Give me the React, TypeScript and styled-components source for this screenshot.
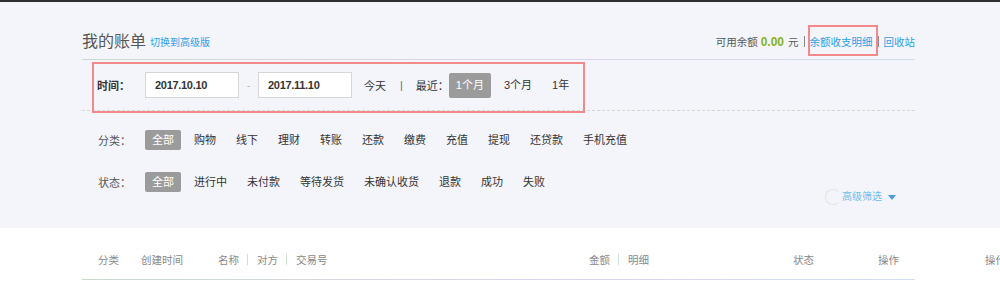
import React from 'react';
import styled, { createGlobalStyle } from 'styled-components';

const GlobalStyle = createGlobalStyle`
  html, body {
    margin: 0;
    padding: 0;
    background: #fff;
    overflow: hidden;
  }
  body {
    font-family: "Liberation Sans", "Noto Sans CJK SC", sans-serif;
    color: #333;
  }
`;

const Page = styled.div`
  position: relative;
  width: 1000px;
  height: 285px;
  overflow: hidden;
`;

const TopBar = styled.div`
  height: 2px;
  background: #2f2f2f;
`;

const Upper = styled.section`
  background: #f4f5fa;
  padding-bottom: 25px;
`;

const Container = styled.div`
  margin-left: 82px;
  width: 833px;
`;

const Header = styled.div`
  display: flex;
  align-items: center;
  height: 35px;
  padding-top: 22px;
`;

const Title = styled.h1`
  margin: 0;
  font-size: 16px;
  font-weight: normal;
  line-height: 20px;
  color: #555;
`;

const BlueLink = styled.a<{ $size?: number }>`
  color: #2ba0e6;
  font-size: ${(p) => p.$size || 10.5}px;
  text-decoration: none;
  line-height: 16px;
`;

const SwitchLink = styled(BlueLink)`
  margin-left: 4px;
  margin-top: 2px;
`;

const Balance = styled.div`
  margin-left: auto;
  display: flex;
  align-items: center;
  font-size: 10.5px;
  color: #555;
  line-height: 16px;
`;

const Amount = styled.b`
  color: #86b21a;
  font-size: 12px;
  margin: 0 4px 0 3px;
`;

const Bar = styled.span<{ $gap?: number }>`
  display: inline-block;
  width: 1px;
  height: 11px;
  background: #888;
  margin: 0 ${(p) => p.$gap || 5}px;
`;

const GradientLine = styled.div`
  height: 1px;
  background: linear-gradient(to right, #c9dccb, #ddd3ee 55%, #cfe0f3);
`;

const TimeRow = styled.div`
  display: flex;
  align-items: center;
  height: 50px;
  padding-left: 15px;
  border-bottom: 1px dashed #d6d6d6;
  font-size: 11px;
`;

const RowLabel = styled.span<{ $bold?: boolean; $w: number }>`
  width: ${(p) => p.$w}px;
  flex-shrink: 0;
  font-size: 11px;
  font-weight: ${(p) => (p.$bold ? 'bold' : 'normal')};
  color: ${(p) => (p.$bold ? '#333' : '#555')};
`;

const DateInput = styled.input`
  box-sizing: border-box;
  width: 94px;
  height: 26px;
  border: 1px solid #d6d6d6;
  background: #fff;
  padding: 0 0 0 9px;
  font-family: "Liberation Sans", sans-serif;
  font-size: 11px;
  font-weight: bold;
  letter-spacing: -0.3px;
  color: #333;
  outline: none;
`;

const Dash = styled.span`
  width: 19px;
  text-align: center;
  color: #bbb;
`;

const Plain = styled.span<{ $ml?: number }>`
  margin-left: ${(p) => p.$ml || 0}px;
  color: #333;
`;

const Pipe = styled.span`
  margin: 0 13px 0 14px;
  color: #666;
`;

const Chip = styled.span<{ $active?: boolean; $h: number }>`
  display: inline-block;
  flex-shrink: 0;
  padding: 0 7px;
  height: ${(p) => p.$h}px;
  line-height: ${(p) => p.$h}px;
  margin-right: 6px;
  border-radius: 2px;
  font-size: 11px;
  background: ${(p) => (p.$active ? '#9b9b9b' : 'transparent')};
  color: ${(p) => (p.$active ? '#fff' : '#333')};
`;

const Filters = styled.div`
  padding-top: 8px;
`;

const FilterRow = styled.div`
  display: flex;
  align-items: center;
  height: 42px;
  padding-left: 16px;
`;

const Advanced = styled.div`
  margin-left: auto;
  margin-right: 19px;
  margin-bottom: -2px;
  align-self: flex-end;
  display: flex;
  align-items: center;
  font-size: 10px;
  line-height: 14px;
  color: #6bbdec;
`;

const Ghost = styled.span`
  width: 14px;
  height: 14px;
  border-radius: 50%;
  border: 1px solid #e2e2e2;
  border-right-color: transparent;
  margin-right: 1px;
`;

const Caret = styled.span`
  margin-left: 6px;
  width: 0;
  height: 0;
  border-left: 4px solid transparent;
  border-right: 4px solid transparent;
  border-top: 5px solid #4a9ae8;
`;

const Lower = styled.section`
  background: #fff;
  padding-top: 21px;
`;

const HeadRow = styled.div`
  display: flex;
  align-items: center;
  height: 20px;
  padding-left: 16px;
  font-size: 10.5px;
  color: #888;
  white-space: nowrap;
`;

const Cell = styled.div<{ $w?: number }>`
  display: flex;
  align-items: center;
  flex-shrink: 0;
  width: ${(p) => (p.$w ? `${p.$w}px` : 'auto')};
`;

const ThinSep = styled.span`
  display: inline-block;
  width: 1px;
  height: 11px;
  background: #cfe0cf;
  margin: 0 9px 0 8px;
`;

const BottomLine = styled(GradientLine)`
  margin-top: 10px;
`;

const Annotation = styled.div<{ $l: number; $t: number; $w: number; $h: number }>`
  position: absolute;
  left: ${(p) => p.$l}px;
  top: ${(p) => p.$t}px;
  width: ${(p) => p.$w}px;
  height: ${(p) => p.$h}px;
  box-sizing: border-box;
  border: 2px solid #f28a8a;
  pointer-events: none;
`;

const categories = ['全部', '购物', '线下', '理财', '转账', '还款', '缴费', '充值', '提现', '还贷款', '手机充值'];
const statuses = ['全部', '进行中', '未付款', '等待发货', '未确认收货', '退款', '成功', '失败'];

const App = () => {
  return (
    <Page>
      <GlobalStyle />
      <TopBar />
      <Upper>
        <Container>
          <Header>
            <Title>我的账单</Title>
            <SwitchLink href="#" $size={10}>切换到高级版</SwitchLink>
            <Balance>
              可用余额 <Amount>0.00</Amount> 元
              <Bar />
              <BlueLink href="#">余额收支明细</BlueLink>
              <Bar />
              <BlueLink href="#">回收站</BlueLink>
            </Balance>
          </Header>
          <GradientLine />
          <TimeRow>
            <RowLabel $bold $w={48}>时间：</RowLabel>
            <DateInput readOnly value="2017.10.10" />
            <Dash>-</Dash>
            <DateInput readOnly value="2017.11.10" />
            <Plain $ml={12}>今天</Plain>
            <Pipe>|</Pipe>
            <Plain>最近：</Plain>
            <Chip $active $h={25}>1个月</Chip>
            <Chip $h={25}>3个月</Chip>
            <Chip $h={25}>1年</Chip>
          </TimeRow>
          <Filters>
            <FilterRow>
              <RowLabel $w={47}>分类：</RowLabel>
              {categories.map((c, i) => (
                <Chip key={c} $active={i === 0} $h={20}>
                  {c}
                </Chip>
              ))}
            </FilterRow>
            <FilterRow>
              <RowLabel $w={47}>状态：</RowLabel>
              {statuses.map((s, i) => (
                <Chip key={s} $active={i === 0} $h={20}>
                  {s}
                </Chip>
              ))}
              <Advanced>
                <Ghost />
                高级筛选
                <Caret />
              </Advanced>
            </FilterRow>
          </Filters>
        </Container>
      </Upper>
      <Lower>
        <Container>
          <HeadRow>
            <Cell $w={43}>分类</Cell>
            <Cell $w={77}>创建时间</Cell>
            <Cell $w={371}>
              名称<ThinSep />对方<ThinSep />交易号
            </Cell>
            <Cell $w={204}>
              金额<ThinSep />明细
            </Cell>
            <Cell $w={85}>状态</Cell>
            <Cell $w={107}>操作</Cell>
            <Cell>操作</Cell>
          </HeadRow>
          <BottomLine />
        </Container>
      </Lower>
      <Annotation $l={92} $t={62} $w={493} $h={51} />
      <Annotation $l={808} $t={25} $w={70} $h={31} />
    </Page>
  );
};

export default App;
